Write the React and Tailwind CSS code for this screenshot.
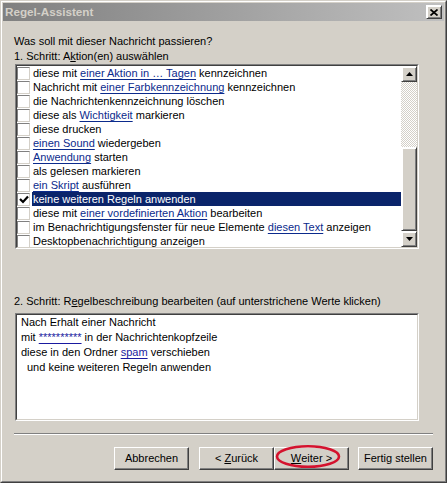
import React from 'react';

const font = { fontFamily: '"Liberation Sans", Arial, sans-serif' };

// raised 3D frame like a classic Windows button
const raised =
  'border border-t-white border-l-white border-r-[#404040] border-b-[#404040] shadow-[inset_-1px_-1px_#808080]';

const L = ({ children, className = 'text-[#0b2a8c]' }) => (
  <span className={`underline underline-offset-[2px] ${className}`}>{children}</span>
);

const actions = [
  { parts: ['diese mit ', <L key="l">einer Aktion in … Tagen</L>, ' kennzeichnen'] },
  { parts: ['Nachricht mit ', <L key="l">einer Farbkennzeichnung</L>, ' kennzeichnen'] },
  { parts: ['die Nachrichtenkennzeichnung löschen'] },
  { parts: ['diese als ', <L key="l">Wichtigkeit</L>, ' markieren'] },
  { parts: ['diese drucken'] },
  { parts: [<L key="l">einen Sound</L>, ' wiedergeben'] },
  { parts: [<L key="l">Anwendung</L>, ' starten'] },
  { parts: ['als gelesen markieren'] },
  { parts: [<L key="l">ein Skript</L>, ' ausführen'] },
  { parts: ['keine weiteren Regeln anwenden'], checked: true, selected: true },
  { parts: ['diese mit ', <L key="l">einer vordefinierten Aktion</L>, ' bearbeiten'] },
  { parts: ['im Benachrichtigungsfenster für neue Elemente ', <L key="l">diesen Text</L>, ' anzeigen'] },
  { parts: ['Desktopbenachrichtigung anzeigen'] },
];

const Checkbox = ({ checked }) => (
  <div className="w-[13px] h-[13px] shrink-0 bg-white border border-t-[#808080] border-l-[#808080] border-r-[#d4d0c8] border-b-[#d4d0c8] flex items-center justify-center">
    {checked && (
      <svg width="10" height="9" viewBox="0 0 10 9">
        <polyline points="1,4 4,7 9,1.5" fill="none" stroke="#000" strokeWidth="2.2" />
      </svg>
    )}
  </div>
);

const Sunken = ({ className = '', children }) => (
  <div className={`border border-t-[#808080] border-l-[#808080] border-r-white border-b-white ${className}`}>
    <div className="w-full h-full border border-t-[#404040] border-l-[#404040] border-r-[#d4d0c8] border-b-[#d4d0c8] bg-white overflow-hidden">
      {children}
    </div>
  </div>
);

const Arrow = ({ down }) => (
  <div className={`w-[16px] h-[16px] shrink-0 bg-[#d4d0c8] ${raised} border-t-[#d4d0c8] border-l-[#d4d0c8] shadow-[inset_1px_1px_#fff,inset_-1px_-1px_#808080] flex items-center justify-center`}>
    <svg width="7" height="4" viewBox="0 0 7 4" className={down ? 'rotate-180' : ''}>
      <polygon points="3.5,0 7,4 0,4" fill="#000" />
    </svg>
  </div>
);

const Button = ({ children }) => (
  <div className={`w-[75px] h-[23px] bg-[#d4d0c8] ${raised} flex items-center justify-center text-[11px] text-black`}>
    {children}
  </div>
);

export default function App() {
  return (
    <div style={font} className="w-[447px] h-[483px] border border-t-[#d4d0c8] border-l-[#d4d0c8] border-r-[#404040] border-b-[#404040] text-[11px] text-black">
      <div className="h-full border border-t-white border-l-white border-r-[#808080] border-b-[#808080] bg-[#d4d0c8] p-[1px] flex flex-col">
        {/* title bar */}
        <div className="h-[18px] shrink-0 flex items-center justify-between bg-gradient-to-r from-[#808080] to-[#c0c0c0] pl-[2px] pr-[2px]">
          <span className="font-bold text-[11.7px] text-[#d4d0c8]">Regel-Assistent</span>
          <div className={`w-[16px] h-[14px] bg-[#d4d0c8] ${raised} border-t-[#d4d0c8] border-l-[#d4d0c8] shadow-[inset_1px_1px_#fff,inset_-1px_-1px_#808080] flex items-center justify-center`}>
            <svg width="8" height="7" viewBox="0 0 8 7">
              <path d="M0.5 0.5 L7.5 6.5 M7.5 0.5 L0.5 6.5" stroke="#000" strokeWidth="1.7" />
            </svg>
          </div>
        </div>

        <div className="flex-1 flex flex-col px-[11px]">
          <div className="mt-[13px] leading-[14px]">Was soll mit dieser Nachricht passieren?</div>
          <div className="mt-[1px] leading-[14px]">
            1. Schritt: A<span className="underline">k</span>tion(en) auswählen
          </div>

          <Sunken className="mt-[1px] ml-[1px] w-[404px] h-[185px]">
            <div className="flex h-full">
              <div className="flex-1 flex flex-col overflow-hidden">
                {actions.map((a, i) => (
                  <div key={i} className="h-[14px] shrink-0 flex items-center">
                    <Checkbox checked={a.checked} />
                    <div
                      className={`ml-[2px] px-[1px] h-[14px] leading-[14px] whitespace-nowrap ${
                        a.selected ? 'flex-1 bg-[#0a246a] text-white' : ''
                      }`}
                    >
                      {a.parts}
                    </div>
                  </div>
                ))}
              </div>
              <div className="w-[16px] flex flex-col">
                <Arrow />
                <div className="h-[65px] shrink-0 bg-[repeating-conic-gradient(#d4d0c8_0_25%,#ffffff_0_50%)] bg-size-[2px_2px]" />
                <div className={`flex-1 bg-[#d4d0c8] ${raised} border-t-[#d4d0c8] border-l-[#d4d0c8] shadow-[inset_1px_1px_#fff,inset_-1px_-1px_#808080]`} />
                <Arrow down />
              </div>
            </div>
          </Sunken>

          <div className="mt-[45px] leading-[14px]">
            2. Schritt: R<span className="underline">e</span>gelbeschreibung bearbeiten (auf unterstrichene Werte klicken)
          </div>
          <Sunken className="mt-[5px] ml-[1px] w-[404px] h-[108px]">
            <div className="px-[4px] leading-[15px] whitespace-nowrap">
              <div>Nach Erhalt einer Nachricht</div>
              <div>
                mit <L className="text-[#1a1aa0]">**********</L> in der Nachrichtenkopfzeile
              </div>
              <div>
                diese in den Ordner <L className="text-[#1a1aa0]">spam</L> verschieben
              </div>
              <div className="pl-[6px]">und keine weiteren Regeln anwenden</div>
            </div>
          </Sunken>

          <div className="mt-[12px] h-[2px] border-t border-t-[#808080] border-b border-b-white" />

          <div className="mt-[12px] flex justify-end">
            <Button>Abbrechen</Button>
            <div className="ml-[10px] flex">
              <Button>
                &lt; <span className="underline ml-[3px]">Z</span>urück
              </Button>
              <div className="relative">
                <Button>
                  <span className="underline">W</span>eiter &gt;
                </Button>
                <svg
                  className="absolute left-0 top-[-3px] pointer-events-none"
                  width="70"
                  height="26"
                  viewBox="0 0 70 26"
                >
                  <ellipse cx="34" cy="12.5" rx="31" ry="10.3" fill="none" stroke="#d4122e" strokeWidth="2.6" />
                </svg>
              </div>
            </div>
            <div className="ml-[9px]">
              <Button>Fertig stellen</Button>
            </div>
          </div>
        </div>
      </div>
    </div>
  );
}
